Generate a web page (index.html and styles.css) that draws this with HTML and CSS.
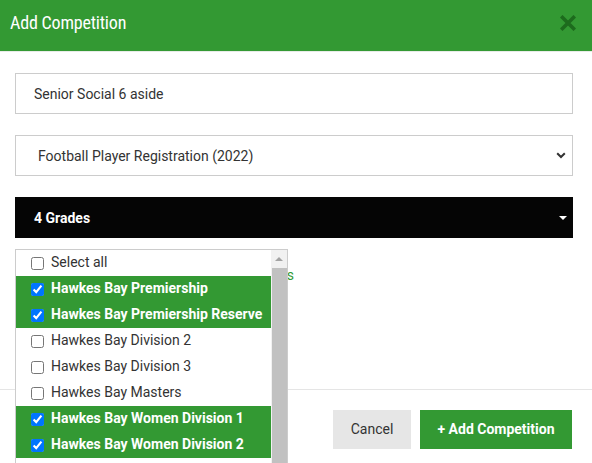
FILE: index.html
```
<!DOCTYPE html>
<html>
<head>
<meta charset="utf-8">
<link rel="stylesheet" href="styles.css">
</head>
<body>
<div class="modal">
  <div class="header">
    <span class="title">Add Competition</span>
    <svg class="close" width="16" height="16" viewBox="0 0 16 16"><path d="M2.5 2.5 L13.5 13.5 M13.5 2.5 L2.5 13.5" stroke="#1d6b1d" stroke-width="3.6" stroke-linecap="square"/></svg>
  </div>
  <div class="body">
    <div class="field">Senior Social 6 aside</div>
    <div class="field select">
      <span class="select-text">Football Player Registration (2022)</span>
      <svg width="10" height="7" viewBox="0 0 10 7"><path d="M1.2 1.2 L5 5 L8.8 1.2" fill="none" stroke="#333" stroke-width="2"/></svg>
    </div>
    <div class="field dark">
      <span>4 Grades</span>
      <svg width="8" height="4" viewBox="0 0 8 4"><path d="M0 0 L8 0 L4 4 Z" fill="#fff"/></svg>
    </div>
    <div class="hint">Select Grades</div>
    <div class="list">
      <div class="items">
        <label class="item"><input type="checkbox"> Select all</label>
        <label class="item on"><input type="checkbox" checked> Hawkes Bay Premiership</label>
        <label class="item on"><input type="checkbox" checked> Hawkes Bay Premiership Reserve</label>
        <label class="item"><input type="checkbox"> Hawkes Bay Division 2</label>
        <label class="item"><input type="checkbox"> Hawkes Bay Division 3</label>
        <label class="item"><input type="checkbox"> Hawkes Bay Masters</label>
        <label class="item on"><input type="checkbox" checked> Hawkes Bay Women Division 1</label>
        <label class="item on"><input type="checkbox" checked> Hawkes Bay Women Division 2</label>
      </div>
      <div class="scrollbar">
        <div class="arrow"><svg width="8" height="4" viewBox="0 0 8 4"><path d="M0 4 L4 0 L8 4 Z" fill="#a3a3a3"/></svg></div>
        <div class="thumb"></div>
      </div>
    </div>
  </div>
  <div class="footer">
    <button class="btn cancel">Cancel</button>
    <button class="btn add">+ Add Competition</button>
  </div>
</div>
</body>
</html>
```
FILE: styles.css
```
html, body {
  margin: 0;
  padding: 0;
  background: #fff;
  overflow: hidden;
}
body {
  font-family: Roboto, "Liberation Sans", sans-serif;
  color: #333;
  width: 592px;
  height: 463px;
}
.modal {
  position: relative;
}
.header {
  height: 51px;
  background: #339933;
  border-bottom: 1px solid #e8ece8;
  display: flex;
  align-items: center;
  justify-content: space-between;
  padding: 0 16px 0 10px;
}
.title {
  color: #fff;
  font-family: "Liberation Sans Narrow", "Roboto Condensed", Roboto, sans-serif;
  font-size: 18px;
  letter-spacing: -0.2px;
  font-weight: 400;
  position: relative;
  top: -3px;
}
.close {
  position: relative;
  top: -3px;
}
.body {
  position: relative;
  padding: 21px 19px 0 15px;
  height: 316px;
  border-bottom: 1px solid #e5e5e5;
  box-sizing: content-box;
}
.field {
  height: 41px;
  box-sizing: border-box;
  border: 1px solid #ccc;
  display: flex;
  align-items: center;
  padding: 0 18px;
  font-size: 14px;
  color: #333;
  margin-bottom: 21px;
}
.select {
  justify-content: space-between;
  padding: 0 6px 0 22px;
}
.dark {
  background: #050505;
  border-color: #050505;
  color: #fff;
  font-weight: 700;
  justify-content: space-between;
  padding: 0 5px 0 18px;
}
.hint {
  width: 279px;
  text-align: right;
  color: #339933;
  font-size: 14px;
  margin-top: 29px;
}
.list {
  position: absolute;
  left: 15px;
  top: 197px;
  width: 273px;
  height: 260px;
  border: 1px solid #ccc;
  box-sizing: border-box;
  background: #fff;
  display: flex;
  overflow: hidden;
}
.items {
  width: 255px;
  display: flex;
  flex-direction: column;
}
.item {
  height: 26px;
  box-sizing: border-box;
  padding-bottom: 2px;
  flex: none;
  display: flex;
  align-items: center;
  font-size: 14px;
  color: #333;
  padding-left: 15px;
  gap: 7px;
  white-space: nowrap;
}
.item input {
  width: 13px;
  height: 13px;
  margin: 0;
  position: relative;
  top: 1px;
}
.item.on {
  background: #339933;
  color: #fff;
  font-weight: 700;
}
.scrollbar {
  width: 16px;
  background: #f1f1f1;
  display: flex;
  flex-direction: column;
  align-items: center;
}
.arrow {
  height: 18px;
  display: flex;
  align-items: center;
  justify-content: center;
}
.thumb {
  width: 15px;
  flex: 1;
  background: #c1c1c1;
}
.footer {
  display: flex;
  justify-content: flex-end;
  gap: 9px;
  padding: 20px 20px 0 0;
}
.btn {
  height: 39px;
  border: none;
  font-family: Roboto, "Liberation Sans", sans-serif;
  font-size: 14px;
  padding: 0 0 1px;
}
.cancel {
  width: 78px;
  background: #e6e6e6;
  color: #333;
}
.add {
  width: 152px;
  background: #339933;
  color: #fff;
  font-weight: 700;
}
```
